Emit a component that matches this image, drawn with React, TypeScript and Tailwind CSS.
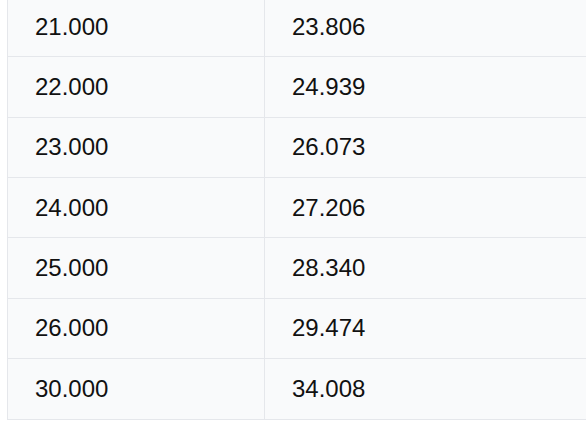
const rows: [string, string][] = [
  ["21.000", "23.806"],
  ["22.000", "24.939"],
  ["23.000", "26.073"],
  ["24.000", "27.206"],
  ["25.000", "28.340"],
  ["26.000", "29.474"],
  ["30.000", "34.008"],
]

export default function App() {
  return (
    <div className="w-full h-screen overflow-hidden bg-white" style={{ fontFamily: '"Liberation Sans", Arial, sans-serif' }}>
      <div className="ml-[7px] -mt-[3px] w-[640px] border-l border-b border-[#e5e7eb] bg-[#f9fafb] text-[24px] text-[#111111]">
        {rows.map(([a, b], i) => (
          <div
            key={i}
            className={`grid grid-cols-[257px_1fr] h-[60.33px] ${i < rows.length - 1 ? "border-b border-[#e5e7eb]" : ""}`}
          >
            <div className="flex items-center pl-[27px] border-r border-[#e5e7eb]">{a}</div>
            <div className="flex items-center pl-[27px]">{b}</div>
          </div>
        ))}
      </div>
    </div>
  )
}
